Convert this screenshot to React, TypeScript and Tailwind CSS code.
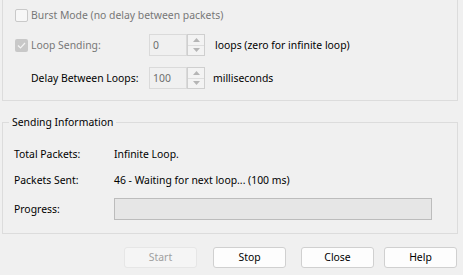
import React from "react";

const font = { fontFamily: '"Noto Sans", "Open Sans", sans-serif' };

function Spinner({ value }: { value: string }) {
  return (
    <div className="flex h-[22px] w-[56px]">
      <div className="flex flex-1 items-center border border-[#dadada] bg-[#f0f0f0] pl-[3px] text-[#6d6d6d]">
        {value}
      </div>
      <div className="flex w-[18px] flex-col border border-[#cfcfcf] bg-[#f3f3f3]">
        <div className="flex flex-1 items-center justify-center border-b border-[#dedede]">
          <svg width="7" height="4" viewBox="0 0 7 4">
            <path d="M0 4 L3.5 0 L7 4 Z" fill="#b5b5b5" />
          </svg>
        </div>
        <div className="flex flex-1 items-center justify-center">
          <svg width="7" height="4" viewBox="0 0 7 4">
            <path d="M0 0 L3.5 4 L7 0 Z" fill="#b5b5b5" />
          </svg>
        </div>
      </div>
    </div>
  );
}

function Button({ label, disabled }: { label: string; disabled?: boolean }) {
  return (
    <button
      disabled={disabled}
      className={
        disabled
          ? "h-[21px] w-[73px] rounded-[3px] border border-[#e6e6e6] bg-[#f5f5f5] text-[#a0a0a0]"
          : "h-[21px] w-[73px] rounded-[3px] border border-[#d0d0d0] bg-[#fdfdfd] text-black"
      }
    >
      {label}
    </button>
  );
}

export default function App() {
  return (
    <div
      className="relative h-[275px] w-[463px] overflow-hidden whitespace-nowrap bg-[#f0f0f0] text-[10.4px] leading-none text-black"
      style={font}
    >
      {/* Loop options group (top edge scrolled off) */}
      <div className="ml-[2px] mt-[-6px] h-[107px] w-[456px] border border-[#dcdcdc] pt-[14px]">
        <div className="flex items-center pl-[12px]">
          <span className="h-[13px] w-[13px] rounded-[2px] border border-[#c9c9c9] bg-[#f7f7f7]" />
          <span className="ml-[3px] text-[#777777]">Burst Mode (no delay between packets)</span>
        </div>
        <div className="mt-[12px] flex items-center">
          <div className="flex w-[146px] items-center pl-[12px]">
            <span className="flex h-[13px] w-[13px] items-center justify-center rounded-[2px] bg-[#c8c8c8]">
              <svg width="9" height="7" viewBox="0 0 9 7">
                <path d="M1 3.5 L3.5 6 L8 1" stroke="#f4f4f4" strokeWidth="1.2" fill="none" />
              </svg>
            </span>
            <span className="ml-[3px] text-[#777777]">Loop Sending:</span>
          </div>
          <Spinner value="0" />
          <span className="ml-[10px]">loops (zero for infinite loop)</span>
        </div>
        <div className="mt-[11px] flex items-center">
          <span className="w-[146px] pl-[28px]">Delay Between Loops:</span>
          <Spinner value="100" />
          <span className="ml-[8px]">milliseconds</span>
        </div>
      </div>

      {/* Sending information group */}
      <div className="relative ml-[2px] mt-[21px] h-[112px] w-[456px] border border-[#dcdcdc]">
        <span className="absolute left-[6px] top-[-6px] bg-[#f0f0f0] px-[3px]">Sending Information</span>
        <div className="flex pl-[11px] pt-[26px]">
          <span className="w-[100px]">Total Packets:</span>
          <span>Infinite Loop.</span>
        </div>
        <div className="mt-[16px] flex pl-[11px]">
          <span className="w-[100px]">Packets Sent:</span>
          <span>46 - Waiting for next loop... (100 ms)</span>
        </div>
        <div className="mt-[12px] flex items-center pl-[11px]">
          <span className="w-[100px]">Progress:</span>
          <div className="h-[22px] w-[318px] border border-[#bcbcbc] bg-[#e6e6e6]" />
        </div>
      </div>

      <div className="mt-[13px] flex pl-[124px]">
        <Button label="Start" disabled />
        <div className="ml-[16px]">
          <Button label="Stop" />
        </div>
        <div className="ml-[15px]">
          <Button label="Close" />
        </div>
        <div className="ml-[10px]">
          <Button label="Help" />
        </div>
      </div>
    </div>
  );
}
